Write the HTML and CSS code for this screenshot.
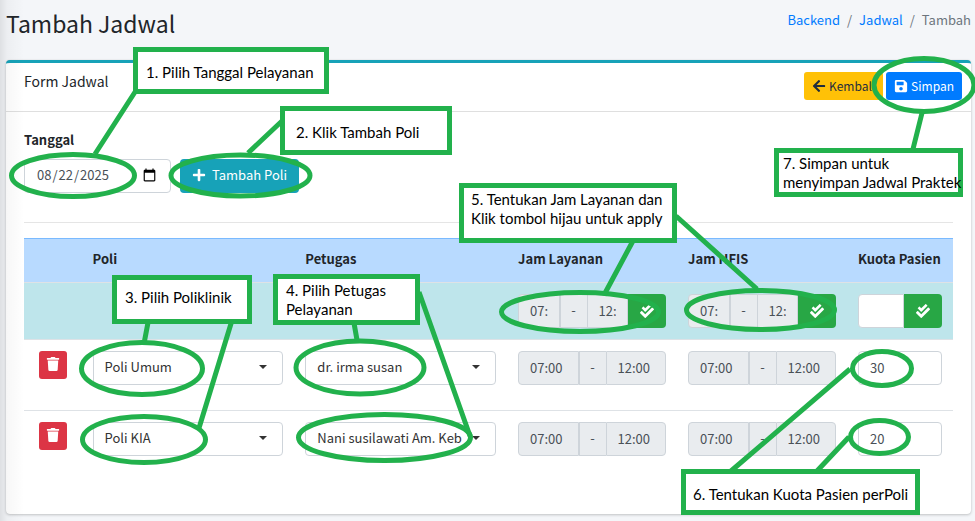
FILE: index.html
```html
<!DOCTYPE html>
<html lang="en-US">
<head>
<meta charset="utf-8">
<meta name="viewport" content="width=device-width, initial-scale=1">
<title>Tambah Jadwal</title>
<link rel="stylesheet" href="styles.css">
</head>
<body>
<svg class="defs" aria-hidden="true">
  <symbol id="plus" viewBox="0 0 448 512"><path d="M416 208H272V64c0-17.67-14.33-32-32-32h-32c-17.67 0-32 14.33-32 32v144H32c-17.67 0-32 14.33-32 32v32c0 17.67 14.33 32 32 32h144v144c0 17.67 14.33 32 32 32h32c17.67 0 32-14.33 32-32V304h144c17.67 0 32-14.33 32-32v-32c0-17.67-14.33-32-32-32z"/></symbol>
  <symbol id="arrow" viewBox="0 0 448 512"><path d="M257.5 445.1l-22.2 22.2c-9.4 9.4-24.6 9.4-33.9 0L7 273c-9.4-9.4-9.4-24.6 0-33.9L201.4 44.7c9.4-9.4 24.6-9.4 33.9 0l22.2 22.2c9.5 9.5 9.3 25-.4 34.3L136.6 216H424c13.3 0 24 10.7 24 24v32c0 13.3-10.7 24-24 24H136.6l120.5 114.8c9.8 9.3 10 24.8.4 34.3z"/></symbol>
  <symbol id="save" viewBox="0 0 448 512"><path d="M433.941 129.941l-83.882-83.882A48 48 0 0 0 316.118 32H48C21.49 32 0 53.49 0 80v352c0 26.51 21.49 48 48 48h352c26.51 0 48-21.49 48-48V163.882a48 48 0 0 0-14.059-33.941zM224 416c-35.346 0-64-28.654-64-64 0-35.346 28.654-64 64-64s64 28.654 64 64c0 35.346-28.654 64-64 64zm96-304.52V212c0 6.627-5.373 12-12 12H76c-6.627 0-12-5.373-12-12V108c0-6.627 5.373-12 12-12h228.52c3.183 0 6.235 1.264 8.485 3.515l3.48 3.48A11.996 11.996 0 0 1 320 111.48z"/></symbol>
  <symbol id="trash" viewBox="0 0 448 512"><path d="M432 32H312l-9.4-18.7A24 24 0 0 0 281.1 0H166.8a23.72 23.72 0 0 0-21.4 13.3L136 32H16A16 16 0 0 0 0 48v32a16 16 0 0 0 16 16h416a16 16 0 0 0 16-16V48a16 16 0 0 0-16-16zM53.2 467a48 48 0 0 0 47.9 45h245.8a48 48 0 0 0 47.9-45L416 128H32z"/></symbol>
  <symbol id="checks" viewBox="0 0 512 512"><path d="M505 174.8l-39.6-39.6c-9.4-9.4-24.6-9.4-33.9 0L192 374.7 80.6 263.2c-9.4-9.4-24.6-9.4-33.9 0L7 302.9c-9.4 9.4-9.4 24.6 0 34L175 505c9.4 9.4 24.6 9.4 33.9 0l296-296.2c9.4-9.5 9.4-24.7.1-34zm-324.3 106c6.2 6.3 16.4 6.3 22.6 0l208-208.2c6.2-6.3 6.2-16.4 0-22.6L366.1 4.7c-6.2-6.3-16.4-6.3-22.6 0L192 156.2l-55.4-55.5c-6.2-6.3-16.4-6.3-22.6 0L68.7 146c-6.2 6.3-6.2 16.4 0 22.6l112 112.2z"/></symbol>
</svg>

<header class="page-header">
  <h1>Tambah Jadwal</h1>
  <nav class="breadcrumb" aria-label="Breadcrumb">
    <a href="#">Backend</a><span>/</span><a href="#">Jadwal</a><span>/</span><span>Tambah</span>
  </nav>
</header>

<main class="card">
  <div class="card-header">
    <h2>Form Jadwal</h2>
    <div class="actions">
      <button type="button" class="btn btn-sm btn-warning"><svg class="icon"><use href="#arrow"/></svg>Kembali</button>
      <button type="button" class="btn btn-sm btn-primary"><svg class="icon"><use href="#save"/></svg>Simpan</button>
    </div>
  </div>
  <form class="card-body">
    <label class="label" for="tanggal">Tanggal</label>
    <div class="date-row">
      <input class="control date" id="tanggal" type="date" value="2025-08-22">
      <button type="button" class="btn btn-info"><svg class="icon"><use href="#plus"/></svg>Tambah Poli</button>
    </div>
    <hr>
    <table>
      <colgroup>
        <col class="col-action"><col class="col-select"><col class="col-select"><col class="col-time"><col class="col-time"><col>
      </colgroup>
      <thead>
        <tr><th></th><th>Poli</th><th>Petugas</th><th>Jam Layanan</th><th>Jam HFIS</th><th>Kuota Pasien</th></tr>
      </thead>
      <tbody>
        <tr class="apply-row">
          <td></td><td></td><td></td>
          <td><div class="group">
            <input class="control" aria-label="Jam layanan mulai" value="07:00" disabled><span class="dash">-</span><input class="control" aria-label="Jam layanan selesai" value="12:00" disabled>
            <button type="button" class="btn btn-success" aria-label="Terapkan jam layanan"><svg class="icon"><use href="#checks"/></svg></button>
          </div></td>
          <td><div class="group">
            <input class="control" aria-label="Jam HFIS mulai" value="07:00" disabled><span class="dash">-</span><input class="control" aria-label="Jam HFIS selesai" value="12:00" disabled>
            <button type="button" class="btn btn-success" aria-label="Terapkan jam HFIS"><svg class="icon"><use href="#checks"/></svg></button>
          </div></td>
          <td><div class="group">
            <input class="control" aria-label="Kuota pasien">
            <button type="button" class="btn btn-success" aria-label="Terapkan kuota"><svg class="icon"><use href="#checks"/></svg></button>
          </div></td>
        </tr>
        <tr class="data-row">
          <td class="center"><button type="button" class="btn btn-danger" aria-label="Hapus Poli Umum"><svg class="icon"><use href="#trash"/></svg></button></td>
          <td><div class="select"><select class="control" aria-label="Poli"><option>Poli Umum</option></select></div></td>
          <td><div class="select"><select class="control" aria-label="Petugas"><option>dr. irma susan</option></select></div></td>
          <td><div class="group"><input class="control" aria-label="Jam layanan mulai" value="07:00" disabled><span class="dash">-</span><input class="control" aria-label="Jam layanan selesai" value="12:00" disabled></div></td>
          <td><div class="group"><input class="control" aria-label="Jam HFIS mulai" value="07:00" disabled><span class="dash">-</span><input class="control" aria-label="Jam HFIS selesai" value="12:00" disabled></div></td>
          <td><input class="control" aria-label="Kuota pasien" value="30"></td>
        </tr>
        <tr class="data-row">
          <td class="center"><button type="button" class="btn btn-danger" aria-label="Hapus Poli KIA"><svg class="icon"><use href="#trash"/></svg></button></td>
          <td><div class="select"><select class="control" aria-label="Poli"><option>Poli KIA</option></select></div></td>
          <td><div class="select"><select class="control" aria-label="Petugas"><option>Nani susilawati Am. Keb</option></select></div></td>
          <td><div class="group"><input class="control" aria-label="Jam layanan mulai" value="07:00" disabled><span class="dash">-</span><input class="control" aria-label="Jam layanan selesai" value="12:00" disabled></div></td>
          <td><div class="group"><input class="control" aria-label="Jam HFIS mulai" value="07:00" disabled><span class="dash">-</span><input class="control" aria-label="Jam HFIS selesai" value="12:00" disabled></div></td>
          <td><input class="control" aria-label="Kuota pasien" value="20"></td>
        </tr>
      </tbody>
    </table>
  </form>
</main>

<div class="edge-shadow"></div>

<div class="guide">
  <svg class="marks" viewBox="0 0 975 521" aria-hidden="true">
    <ellipse cx="73" cy="175.5" rx="61.5" ry="21"/>
    <ellipse cx="240.5" cy="175.5" rx="69.5" ry="20.5"/>
    <ellipse cx="924" cy="85" rx="50" ry="26.5"/>
    <ellipse cx="142" cy="368.5" rx="60.5" ry="26"/>
    <ellipse cx="144" cy="439.5" rx="61.5" ry="23"/>
    <ellipse cx="360" cy="367.5" rx="64" ry="26.5"/>
    <ellipse cx="384.5" cy="437.5" rx="86" ry="23"/>
    <ellipse cx="580" cy="312" rx="78.5" ry="19.5"/>
    <ellipse cx="760.5" cy="310" rx="74" ry="19.5"/>
    <ellipse cx="882" cy="368.5" rx="29.5" ry="17"/>
    <ellipse cx="879.5" cy="437" rx="29" ry="16.5"/>
    <path d="M135 92L95 154M282 121L248 153M148.500 320L144.500 341M231.500 322L199 428M354 323L357 340M419 292L470 436M634 239L604 295M676 216L757 289M731 471L850 369M817 471L849 437M922 113L913 149"/>
  </svg>
  <p class="callout c1">1. Pilih Tanggal Pelayanan</p>
  <p class="callout c2">2. Klik Tambah Poli</p>
  <p class="callout c3">3. Pilih Poliklinik</p>
  <p class="callout c4">4. Pilih Petugas<br>Pelayanan</p>
  <p class="callout c5">5. Tentukan Jam Layanan dan<br>Klik tombol hijau untuk apply</p>
  <p class="callout c6">6. Tentukan Kuota Pasien perPoli</p>
  <p class="callout c7">7. Simpan untuk<br>menyimpan Jadwal Praktek</p>
</div>
</body>
</html>
```
FILE: styles.css
```css
*, *::before, *::after { box-sizing: border-box; }

body {
  margin: 0;
  padding: 0 4px 7px 6px;
  position: relative;
  background: #f4f6f9;
  color: #212529;
  font-family: "Noto Sans CJK JP", "Noto Sans", sans-serif;
  font-size: 13px;
  line-height: 20px;
}

h1, h2, p { margin: 0; font-weight: 400; }

.defs { display: none; }
.icon { width: 14px; height: 14px; fill: currentColor; flex: none; }

.page-header {
  display: flex;
  justify-content: space-between;
  align-items: flex-start;
  height: 60px;
  padding-top: 8px;
}
h1 { font-size: 23px; line-height: 30px; }
.breadcrumb { display: flex; gap: 7px; padding-top: 2px; color: #6c757d; }
a { color: #007bff; text-decoration: none; }

.card {
  background: #fff;
  border-top: 3px solid #17a2b8;
  border-radius: 4px;
  box-shadow: 0 0 1px rgba(0, 0, 0, .13), 0 1px 3px rgba(0, 0, 0, .2);
}
.card-header {
  display: flex;
  justify-content: space-between;
  padding: 9px 9px 11px 18px;
  border-bottom: 1px solid #dfdfdf;
}
h2 { font-size: 14px; line-height: 18px; }
.actions { display: flex; gap: 3px; }
.card-body { padding: 18px 18px 33px; }

.btn {
  display: inline-flex;
  align-items: center;
  justify-content: center;
  gap: 6px;
  height: 34px;
  padding: 0 12px 2px;
  border: 0;
  border-radius: 4px;
  color: #fff;
  font: inherit;
}
.btn-sm { height: 28px; gap: 3px; padding: 0 8px 1px; border-radius: 3px; font-size: 12px; }
.btn-warning { background: #ffc107; color: #1f2d3d; }
.btn-primary { background: #007bff; }
.btn-info { background: #17a2b8; }
.btn-success { width: 38px; padding: 0; background: #28a745; flex: none; }
.btn-danger { width: 28px; height: 28px; padding: 0 0 2px; border-radius: 3px; background: #dc3545; }

.label { display: block; margin-bottom: 9px; font-weight: 700; line-height: 20px; }
.date-row { display: flex; gap: 9px; }

.control {
  width: 100%;
  min-width: 0;
  height: 34px;
  padding: 0 11px 2px;
  border: 1px solid #ced4da;
  border-radius: 4px;
  background: #fff;
  color: #495057;
  font: inherit;
}
.control:disabled { background: #e9ecef; color: #495057; opacity: 1; }
.date { width: 147px; }
.date::-webkit-calendar-picker-indicator { width: 15px; height: 15px; }

.select { position: relative; }
.select .control { display: block; appearance: none; color: #333; }
.select::after {
  content: "";
  position: absolute;
  right: 16px;
  top: 14px;
  border: 4px solid transparent;
  border-top-color: #333;
  border-bottom: 0;
}

hr { margin: 29px 0 15px; border: 0; border-top: 1px solid #e5e5e5; }

table { width: 100%; table-layout: fixed; border-collapse: collapse; }
.col-action { width: 6.2%; }
.col-select { width: 22.9%; }
.col-time { width: 18.3%; }
th, td { padding: 11px; border-top: 1px solid #dee2e6; text-align: left; vertical-align: top; }
thead th { padding: 10px 11px 14px; border-top-color: #7abaff; background: #b8daff; line-height: 19px; white-space: nowrap; }
.apply-row td { background: #bee5eb; }
.data-row td { padding-bottom: 25px; }
.center { text-align: center; }
.center .btn { display: flex; margin: 0 auto; }

.group { display: flex; }
.group .control { flex: 1; }
.group > :not(:first-child) { border-top-left-radius: 0; border-bottom-left-radius: 0; }
.group > :not(:last-child) { border-top-right-radius: 0; border-bottom-right-radius: 0; }
.dash {
  flex: none;
  width: 27px;
  border: 1px solid #ced4da;
  border-right: 0;
  background: #e9ecef;
  color: #495057;
  line-height: 30px;
  text-align: center;
}

.edge-shadow {
  position: absolute;
  inset: 0 auto 0 0;
  width: 24px;
  background: linear-gradient(90deg, rgba(0, 0, 0, .09), rgba(0, 0, 0, .03) 30%, transparent);
  pointer-events: none;
}

/* Tutorial annotations laid over the form */
.guide { position: absolute; top: 0; left: 0; width: 975px; height: 521px; pointer-events: none; }
.marks { display: block; width: 100%; height: 100%; fill: none; stroke: #22b14c; stroke-width: 5; }
.callout {
  position: absolute;
  display: flex;
  align-items: center;
  border: 5px solid #22b14c;
  background: #fff;
  color: #000;
  padding-left: 8px;
  font-family: Lato, "Noto Sans", sans-serif;
  font-size: 15px;
  line-height: 19px;
  white-space: nowrap;
}
.c1 { left: 133px; top: 47px; width: 196px; height: 47px; padding-top: 4px; }
.c2 { left: 280px; top: 106px; width: 172px; height: 49px; padding-top: 4px; padding-left: 11px; }
.c3 { left: 112px; top: 275px; width: 140px; height: 49px; padding-bottom: 4px; }
.c4 { left: 273px; top: 274px; width: 147px; height: 51px; }
.c5 { left: 459px; top: 183px; width: 218px; height: 60px; padding-bottom: 8px; padding-left: 7px; }
.c6 { left: 681px; top: 469px; width: 239px; height: 46px; padding-top: 4px; padding-left: 7px; }
.c7 { left: 774px; top: 148px; width: 189px; height: 49px; padding-left: 4px; }
```
